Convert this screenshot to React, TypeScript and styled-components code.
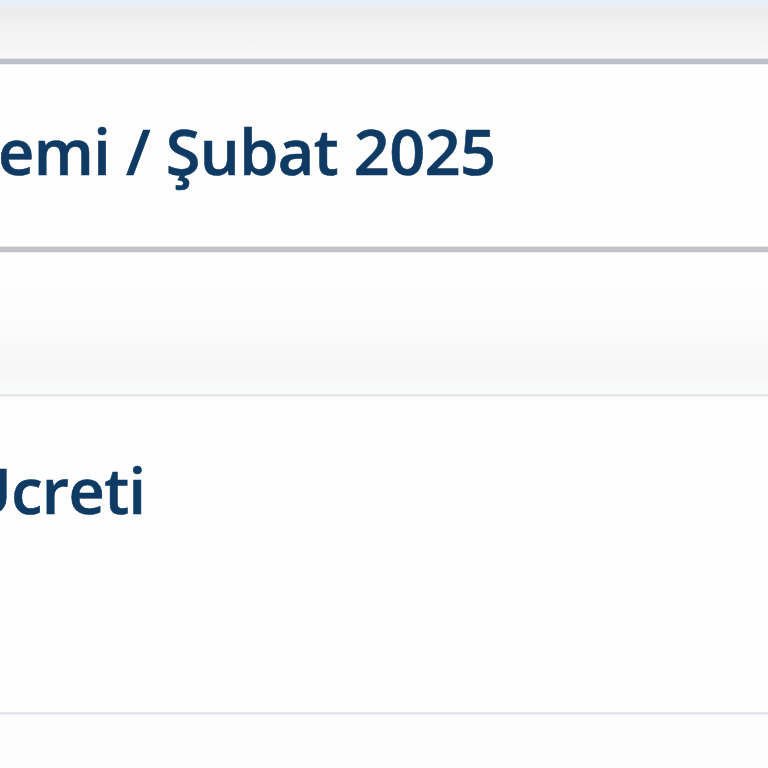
import styled, { createGlobalStyle } from "styled-components"

const GlobalStyle = createGlobalStyle`
  html, body {
    margin: 0;
    padding: 0;
    background: #fdfdfd;
    font-family: "Open Sans", "Noto Sans", sans-serif;
    overflow: hidden;
  }
`

// Layout
const Page = styled.div`
  display: flex;
  flex-direction: column;
  width: 768px;
  height: 768px;
  overflow: hidden;
  background: #fdfdfd;
`
const TopBar = styled.div`
  height: 58px;
  background: linear-gradient(to bottom, #e7eef9 0%, #eeecec 22%, #f1f1f1 45%, #f8f8f8 100%);
`
const Divider = styled.div<{ $size: number, $color: string }>`
  height: ${props => props.$size}px;
  background: ${props => props.$color};
  border-top: 1px solid #e4e6ea;
  border-bottom: 1px solid #eef0f2;
`
const Card = styled.section<{ $height: number, $pad: number }>`
  height: ${props => props.$height}px;
  background: #fefefe;
  padding-top: ${props => props.$pad}px;
  box-sizing: border-box;
  overflow: hidden;
`
const Gap = styled.div`
  height: 141px;
  background: linear-gradient(to bottom, #fefefe 0%, #fdfdfd 40%, #f6f6f6 85%, #fafcfc 100%);
`
const Title = styled.h2<{ $shift: number }>`
  margin: 0 0 0 ${props => props.$shift}px;
  white-space: nowrap;
  color: #0e3a63;
  font-family: "Open Sans", "Noto Sans", sans-serif;
  font-weight: 600;
  font-size: 63px;
  line-height: 1;
  letter-spacing: -0.6px;
  -webkit-text-stroke: 0.6px #0e3a63;
`

export default function App() {
  return (
    <>
      <GlobalStyle />
      <Page>
        <TopBar />
        <Divider $size={5} $color="#bdc1cb" />
        <Card $height={181} $pad={54}>
          <Title $shift={-2}>emi / Şubat 2025</Title>
        </Card>
        <Divider $size={5} $color="#c3c4c9" />
        <Gap />
        <Divider $size={1} $color="#e3e7e8" />
        <Card $height={315} $pad={61}>
          <Title $shift={-35}>Ücreti</Title>
        </Card>
        <Divider $size={1} $color="#dde3ea" />
      </Page>
    </>
  )
}
